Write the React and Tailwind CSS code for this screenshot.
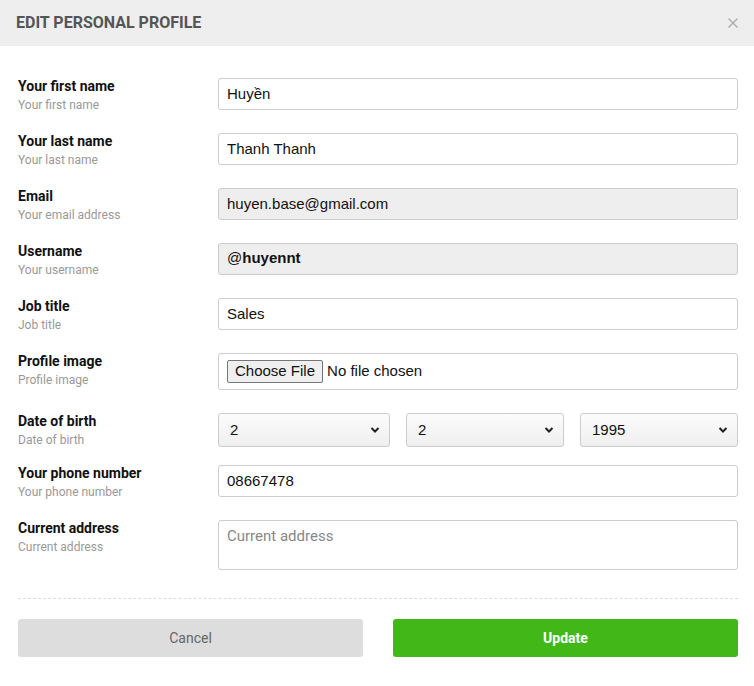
import React from 'react';

const fields = [
  { label: 'Your first name', hint: 'Your first name', value: 'Huyền' },
  { label: 'Your last name', hint: 'Your last name', value: 'Thanh Thanh' },
  { label: 'Email', hint: 'Your email address', value: 'huyen.base@gmail.com', disabled: true },
];

function Label({ title, hint }) {
  return (
    <div className="h-[32px] w-[200px] shrink-0 -mt-[1px] font-['Roboto',sans-serif]">
      <div className="text-[14px] leading-[18px] font-bold text-[#111]">{title}</div>
      <div className="mt-[2px] text-[12px] leading-[16px] text-[#999]">{hint}</div>
    </div>
  );
}

function Chevron() {
  return (
    <svg className="pointer-events-none absolute right-[9px] top-1/2 -translate-y-1/2" width="10" height="7" viewBox="0 0 10 7">
      <path d="M1.5 1.5 L5 5 L8.5 1.5" fill="none" stroke="#222" strokeWidth="2" />
    </svg>
  );
}

function Select({ value, className }) {
  return (
    <div className={`relative h-[34px] rounded-[3px] border border-[#cccccc] bg-gradient-to-b from-[#fcfcfc] to-[#efefef] ${className}`}>
      <div className="flex h-full items-center pl-[11px] text-[15px] text-[#111] font-['Liberation_Sans',Arial,sans-serif]">{value}</div>
      <Chevron />
    </div>
  );
}

export default function App() {
  const inputCls =
    "h-[32px] w-full rounded-[3px] border border-[#cccccc] px-[8px] pb-[1px] text-[15px] text-[#111] font-['Liberation_Sans',Arial,sans-serif] outline-none";

  return (
    <div className="w-[754px] h-[686px] bg-white">
      <div className="flex h-[46px] items-center justify-between bg-[#eeeeee] pl-[16px] pr-[16px]">
        <h1 className="font-['Roboto',sans-serif] text-[16px] font-bold uppercase text-[#555555]">Edit personal profile</h1>
        <svg width="10" height="10" viewBox="0 0 10 10">
          <path d="M0.5 0.5 L9.5 9.5 M9.5 0.5 L0.5 9.5" stroke="#aaaaaa" strokeWidth="1.3" />
        </svg>
      </div>

      <div className="pl-[18px] pr-[16px] pt-[32px]">
        {fields.map((f) => (
          <div key={f.label} className="mb-[23px] flex items-start">
            <Label title={f.label} hint={f.hint} />
            <input
              className={`${inputCls} ${f.disabled ? 'bg-[#eeeeee]' : 'bg-white'}`}
              defaultValue={f.value}
              readOnly={f.disabled}
            />
          </div>
        ))}

        <div className="mb-[23px] flex items-start">
          <Label title="Username" hint="Your username" />
          <div className="flex h-[32px] w-full items-center rounded-[3px] border border-[#cccccc] bg-[#eeeeee] px-[8px] pb-[1px] text-[15px] text-[#111] font-['Liberation_Sans',Arial,sans-serif]">
            @<span className="font-bold">huyennt</span>
          </div>
        </div>

        <div className="mb-[23px] flex items-start">
          <Label title="Job title" hint="Job title" />
          <input className={`${inputCls} bg-white`} defaultValue="Sales" />
        </div>

        <div className="mb-[23px] flex items-start">
          <Label title="Profile image" hint="Profile image" />
          <div className="flex h-[37px] w-full items-center rounded-[3px] border border-[#cccccc] bg-white pl-[8px] text-[15px] text-[#111] font-['Liberation_Sans',Arial,sans-serif]">
            <span className="flex h-[23px] items-center rounded-[2px] border border-[#767676] bg-[#efefef] px-[7px]">Choose File</span>
            <span className="ml-[4px]">No file chosen</span>
          </div>
        </div>

        <div className="mb-[18px] flex items-start">
          <Label title="Date of birth" hint="Date of birth" />
          <div className="flex w-full gap-[16px]">
            <Select value="2" className="w-[172px]" />
            <Select value="2" className="w-[158px]" />
            <Select value="1995" className="flex-1" />
          </div>
        </div>

        <div className="mb-[23px] flex items-start">
          <Label title="Your phone number" hint="Your phone number" />
          <input className={`${inputCls} bg-white`} defaultValue="08667478" />
        </div>

        <div className="flex items-start">
          <Label title="Current address" hint="Current address" />
          <textarea
            className="h-[50px] w-full resize-none rounded-[3px] border border-[#cccccc] px-[8px] pt-[4px] text-[15px] text-[#111] font-['Roboto',sans-serif] outline-none placeholder:text-[#888]"
            placeholder="Current address"
          />
        </div>

        <div className="mt-[28px] border-t border-dashed border-[#dddddd]" />

        <div className="mt-[20px] grid grid-cols-2 gap-[30px] font-['Roboto',sans-serif] text-[14px]">
          <button className="h-[38px] rounded-[3px] bg-[#dddddd] text-[#666666]">Cancel</button>
          <button className="h-[38px] rounded-[3px] bg-[#41b817] font-bold text-white">Update</button>
        </div>
      </div>
    </div>
  );
}
